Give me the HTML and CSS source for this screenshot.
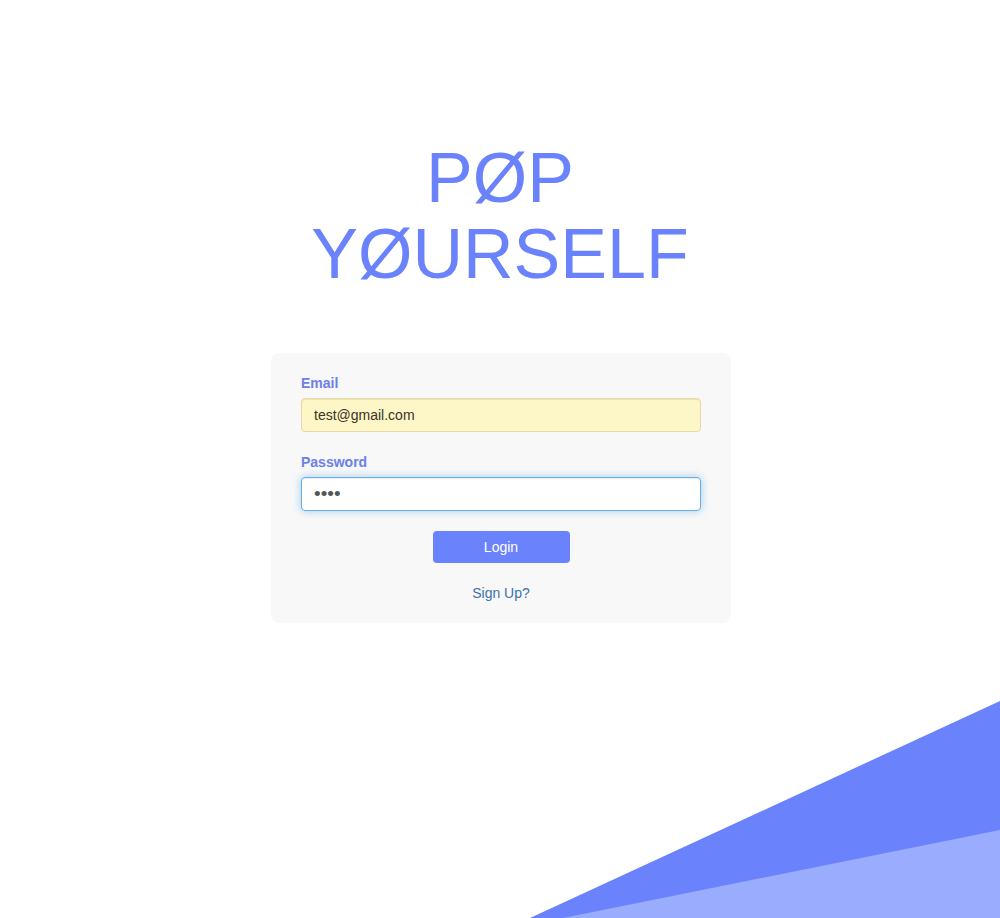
FILE: index.html
```html
<!DOCTYPE html>
<html lang="en">
<head>
<meta charset="utf-8">
<title>Pop Yourself - Login</title>
<link rel="stylesheet" href="styles.css">
</head>
<body>
<main class="page">
  <h1 class="title">PØP<br>YØURSELF</h1>
  <form class="card">
    <div class="field">
      <label class="label" for="email">Email</label>
      <input class="input input-autofill" id="email" type="email" value="test@gmail.com">
    </div>
    <div class="field">
      <label class="label" for="password">Password</label>
      <input class="input input-focus input-password" id="password" type="password" value="abcd" autofocus>
    </div>
    <div class="actions">
      <button class="btn" type="button">Login</button>
    </div>
    <div class="signup"><a class="link" href="#">Sign Up?</a></div>
  </form>
</main>
<svg class="deco" width="470" height="217" viewBox="530 701 470 217" aria-hidden="true">
  <polygon points="530,918 1000,701 1000,918" fill="#6b82fd"/>
  <polygon points="563,918 1000,830 1000,918" fill="#9aacfd"/>
</svg>
</body>
</html>
```
FILE: styles.css
```css
html, body {
  margin: 0;
  padding: 0;
}
body {
  background: #ffffff;
  font-family: "Liberation Sans", Arial, Helvetica, sans-serif;
  font-size: 14px;
  line-height: 20px;
  color: #333333;
  min-height: 918px;
  position: relative;
  overflow: hidden;
}
.page {
  display: flex;
  flex-direction: column;
  align-items: center;
  padding-top: 140px;
  padding-left: 2px;
}
.title {
  margin: 0 0 61px 0;
  font-weight: normal;
  font-size: 70px;
  line-height: 76px;
  color: #6b82fd;
  text-align: center;
  margin-left: -2px;
}
.card {
  width: 460px;
  box-sizing: border-box;
  padding: 20px 30px;
  background: #f8f8f8;
  border-radius: 8px;
  display: flex;
  flex-direction: column;
  gap: 20px;
}
.field {
  display: flex;
  flex-direction: column;
}
.label {
  font-weight: bold;
  font-size: 14px;
  line-height: 20px;
  color: #6b80ec;
  margin-bottom: 5px;
}
.input {
  box-sizing: border-box;
  width: 400px;
  height: 34px;
  padding: 6px 12px;
  font-family: "Liberation Sans", Arial, Helvetica, sans-serif;
  font-size: 14px;
  color: #333333;
  background: #ffffff;
  border: 1px solid #cccccc;
  border-radius: 4px;
  box-shadow: inset 0 1px 1px rgba(0,0,0,0.075);
  outline: none;
  margin: 0;
}
.input-autofill {
  background: #fdf6c6;
  border-color: #e8d7a8;
  color: #3b3326;
}
.input-focus,
.input:focus {
  border-color: #66afe9;
  box-shadow: inset 0 1px 1px rgba(0,0,0,0.075), 0 0 8px rgba(102,175,233,0.6);
  color: #555555;
}
.input-password {
  font-size: 19px;
  letter-spacing: 0;
  padding-top: 4px;
  padding-bottom: 4px;
  caret-color: #333333;
}
.actions {
  display: flex;
  justify-content: center;
}
.btn {
  width: 137px;
  height: 32px;
  border: none;
  border-radius: 4px;
  background: #6b82fd;
  color: #ffffff;
  font-family: "Liberation Sans", Arial, Helvetica, sans-serif;
  font-size: 14px;
  padding: 0;
  cursor: pointer;
}
.signup {
  text-align: center;
  line-height: 20px;
}
.link {
  color: #3b72ab;
  text-decoration: none;
}
.deco {
  position: absolute;
  right: 0;
  bottom: 0;
  display: block;
}
```
